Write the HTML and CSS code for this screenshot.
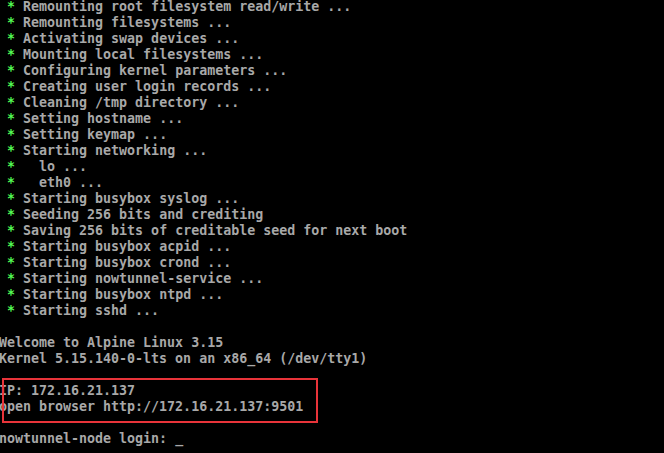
FILE: index.html
```html
<!DOCTYPE html>
<html>
<head>
<meta charset="utf-8">
<link rel="stylesheet" href="styles.css">
</head>
<body>
<div class="screen">
<div class="line"> <span class="ok">*</span> Remounting root filesystem read/write ...</div>
<div class="line"> <span class="ok">*</span> Remounting filesystems ...</div>
<div class="line"> <span class="ok">*</span> Activating swap devices ...</div>
<div class="line"> <span class="ok">*</span> Mounting local filesystems ...</div>
<div class="line"> <span class="ok">*</span> Configuring kernel parameters ...</div>
<div class="line"> <span class="ok">*</span> Creating user login records ...</div>
<div class="line"> <span class="ok">*</span> Cleaning /tmp directory ...</div>
<div class="line"> <span class="ok">*</span> Setting hostname ...</div>
<div class="line"> <span class="ok">*</span> Setting keymap ...</div>
<div class="line"> <span class="ok">*</span> Starting networking ...</div>
<div class="line"> <span class="ok">*</span>   lo ...</div>
<div class="line"> <span class="ok">*</span>   eth0 ...</div>
<div class="line"> <span class="ok">*</span> Starting busybox syslog ...</div>
<div class="line"> <span class="ok">*</span> Seeding 256 bits and crediting</div>
<div class="line"> <span class="ok">*</span> Saving 256 bits of creditable seed for next boot</div>
<div class="line"> <span class="ok">*</span> Starting busybox acpid ...</div>
<div class="line"> <span class="ok">*</span> Starting busybox crond ...</div>
<div class="line"> <span class="ok">*</span> Starting nowtunnel-service ...</div>
<div class="line"> <span class="ok">*</span> Starting busybox ntpd ...</div>
<div class="line"> <span class="ok">*</span> Starting sshd ...</div>
<div class="line"> </div>
<div class="line">Welcome to Alpine Linux 3.15</div>
<div class="line">Kernel 5.15.140-0-lts on an x86_64 (/dev/tty1)</div>
<div class="line"> </div>
<div class="highlight">
<div class="line">IP: 172.16.21.137</div>
<div class="line">open browser http://172.16.21.137:9501</div>
<div class="mark"></div>
</div>
<div class="line"> </div>
<div class="line">nowtunnel-node login: <span class="cursor">_</span></div>
</div>
</body>
</html>
```
FILE: styles.css
```css
html, body {
  margin: 0;
  padding: 0;
  background: #000;
  width: 664px;
  height: 453px;
  overflow: hidden;
}
.screen {
  margin-left: -1px;
  margin-top: -1px;
  font-family: "DejaVu Sans Mono", "Liberation Mono", monospace;
  font-size: 13.3px;
  font-weight: bold;
  line-height: 16px;
  color: #a8a8a8;
}
.line {
  white-space: pre;
  height: 16px;
}
.ok {
  color: #54fc54;
}
.highlight {
  position: relative;
}
.mark {
  position: absolute;
  left: 3px;
  top: -5px;
  width: 312px;
  height: 41px;
  border: 2px solid #e8343a;
}
```
